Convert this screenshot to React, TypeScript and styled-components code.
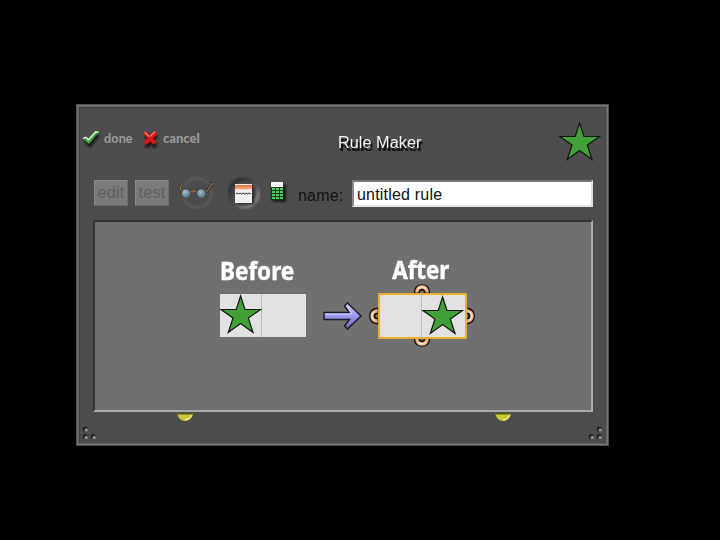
import React from "react";
import styled, { createGlobalStyle } from "styled-components";

const GlobalStyle = createGlobalStyle`
  html, body { margin: 0; background: #000; }
  * { box-sizing: border-box; }
  svg { display: block; flex: none; overflow: visible; }
`;

const Desktop = styled.main`
  width: 720px;
  height: 540px;
  padding: 104px 0 0 76px;
  overflow: hidden;
  background: #000;
  font-family: "Liberation Sans", sans-serif;
`;

const Window = styled.section`
  width: 533px;
  height: 342px;
  background: #4d4d4d;
  border: 1px solid #505050;
  box-shadow: inset 0 0 0 1px #757575, inset 0 0 0 2px #636363,
    inset 3px 3px 0 #414141, inset -3px -3px 0 #484848;
  display: flex;
  flex-direction: column;
`;

const Header = styled.header`
  height: 68px;
  display: flex;
  align-items: flex-start;
  padding: 16px 7px 0 5px;
`;

const Actions = styled.div`
  display: flex;
  width: 256px;
  padding-top: 9px;
`;

const Action = styled.button<{ $width: number; $gap: number }>`
  display: flex;
  align-items: flex-start;
  gap: ${(p) => p.$gap}px;
  width: ${(p) => p.$width}px;
  height: 24px;
  padding: 0;
  border: 0;
  background: none;
`;

const Fitted = styled.span<{ $scale: number }>`
  display: block;
  white-space: nowrap;
  transform-origin: 0 50%;
  transform: scaleX(${(p) => p.$scale});
`;

const ActionText = styled(Fitted)`
  color: #999;
  font: 900 13px/17px Lato, sans-serif;
`;

const Title = styled.h1`
  flex: 1;
  margin: 13px 0 0;
  color: #f4f4f4;
  font: 400 16px/18px "Liberation Sans", sans-serif;
  text-shadow: 1px 3px 0 #111, 2px 3px 0 #111;
`;

const Toolbar = styled.div`
  height: 47px;
  display: flex;
  align-items: flex-start;
  padding: 2px 0 0 17px;
`;

const ToolButton = styled.button`
  width: 34px;
  height: 26px;
  margin: 5px 7px 0 0;
  padding: 0;
  border: 1px solid;
  border-color: #8a8a8a #6c6c6c #6c6c6c #8a8a8a;
  background: #7b7b7b;
  color: #606060;
  font: 400 16px/24px "Liberation Sans", sans-serif;
  letter-spacing: 0.3px;
`;

const NameLabel = styled.label`
  width: 54px;
  margin: 12px 0 0 8px;
  color: #111;
  font: 400 16px/18px "Liberation Sans", sans-serif;
  letter-spacing: 0.2px;
`;

const NameInput = styled.input`
  width: 241px;
  height: 27px;
  margin-top: 5px;
  padding: 2px 0 0 3px;
  border: 2px solid;
  border-color: #777 #ddd #e5e5e5 #888;
  border-radius: 0;
  outline: 0;
  background: #fff;
  color: #111;
  font: 400 16px/20px "Liberation Sans", sans-serif;
  letter-spacing: 0.2px;
`;

const Canvas = styled.div`
  width: 500px;
  height: 192px;
  margin-left: 16px;
  border: 2px solid;
  border-color: #343434 #ababab #ababab #343434;
  background: #707070;
  display: flex;
  padding-left: 125px;
`;

const State = styled.div<{ $width: number; $top: number }>`
  width: ${(p) => p.$width}px;
  padding-top: ${(p) => p.$top}px;
`;

const StateTitle = styled(Fitted)<{ $indent: number }>`
  height: 40px;
  padding-left: ${(p) => p.$indent}px;
  color: #fff;
  font: 700 25px/33px "Noto Sans", sans-serif;
  -webkit-text-stroke: 0.5px #fff;
`;

const Cells = styled.div<{ $active?: boolean }>`
  position: relative;
  display: grid;
  grid-template-columns: 42px 1fr;
  width: ${(p) => (p.$active ? 89 : 86)}px;
  height: ${(p) => (p.$active ? 46 : 43)}px;
  border: ${(p) => (p.$active ? "2px solid #e9ae30" : "0")};
  background: #e1e1e1;
`;

const Cell = styled.div`
  &:first-child { border-right: 1px solid #bdbdbd; }
`;

const ArrowSlot = styled.div`
  width: 72px;
  padding: 79px 0 0 17px;
`;

const Handle = styled.div<{ $x: number; $y: number; $turn: number }>`
  position: absolute;
  z-index: -1;
  left: ${(p) => p.$x}px;
  top: ${(p) => p.$y}px;
  width: 16px;
  height: 10px;
  transform: rotate(${(p) => p.$turn}deg);
`;

const HandleGroup = styled.div`
  position: relative;
  z-index: 0;
`;

const Footer = styled.footer`
  height: 33px;
  display: flex;
  align-items: flex-start;
  justify-content: space-between;
  padding: 0 6px 0 5px;
`;

const Grip = styled.div`
  padding-top: 14px;
`;

const Lamps = styled.div`
  width: 334px;
  padding-top: 1px;
  display: flex;
  justify-content: space-between;
`;

const LampOffset = styled.div`
  flex: 1;
  display: flex;
  padding-left: 80px;
`;

function Star() {
  return (
    <svg width="42" height="40" viewBox="0 0 42 40">
      <path d="M20.6 2 25 15.5H40.5L28.3 24 33 38.5 20.6 29.5 8.3 38.5 13 24 1 15.5H16.2Z" fill="#42a038" stroke="#101510" strokeWidth="1.2" />
    </svg>
  );
}

function SoftShadow() {
  return <filter id="shade" x="-50%" y="-50%" width="200%" height="200%"><feGaussianBlur stdDeviation="1" /></filter>;
}

function Check() {
  return (
    <svg width="18" height="19" viewBox="0 0 18 19">
      <defs><SoftShadow /></defs>
      <path d="M2 10 4 8 7 11 14 4 18 4 8 17Z" fill="#151515" transform="translate(0 1)" filter="url(#shade)" />
      <path d="M1 8.5 4 7 6.5 9.5 13.5 1.5 17 1.5 7 14Z" fill="#3fa642" />
      <path d="M1.2 8.3 4 7.2 6.5 9.7 13.5 2H16.5" fill="none" stroke="#dcf8dc" strokeWidth="1.3" />
    </svg>
  );
}

function Cross() {
  return (
    <svg width="17" height="19" viewBox="0 0 17 19">
      <path d="m4 5 10 12M14 5 4 17" stroke="#171717" strokeWidth="4.5" filter="url(#shade)" />
      <path d="m3 2.5 10 11M14 2.5 3 13.5" stroke="#dc1b13" strokeWidth="4" />
      <path d="m2.5 2 4.5 4.5M13 1.5 8 6.5" stroke="#ff7666" strokeWidth="1.3" />
    </svg>
  );
}

function Glasses() {
  return (
    <svg width="48" height="38" viewBox="0 0 48 38">
      <defs>
        <radialGradient id="dial"><stop offset=".65" stopColor="#4b4b4b" /><stop offset=".87" stopColor="#585858" /><stop offset="1" stopColor="#4d4d4d" /></radialGradient>
        <radialGradient id="lens" cx=".4" cy=".35"><stop stopColor="#a6c0cf" /><stop offset="1" stopColor="#5f7f94" /></radialGradient>
      </defs>
      <circle cx="21" cy="18" r="17" fill="url(#dial)" />
      <path d="M6 18 4 12.5 6.5 9M30 17l2-2 3.5-6h3" fill="none" stroke="#292720" strokeWidth="2.8" />
      <path d="M6 18 4 12.5 6.5 9M30 17l2-2 3.5-6h3M14 17.5q3.5-3 7 0" fill="none" stroke="#847655" strokeWidth="1.4" />
      <circle cx="10" cy="18.5" r="4.8" fill="url(#lens)" stroke="#494638" strokeWidth="1.2" />
      <circle cx="25.3" cy="18.5" r="4.8" fill="url(#lens)" stroke="#494638" strokeWidth="1.2" />
    </svg>
  );
}

function Note() {
  return (
    <svg width="38" height="38" viewBox="0 0 38 38">
      <defs>
        <linearGradient id="ring" x2="1" y2="1"><stop offset=".1" stopColor="#292929" /><stop offset=".5" stopColor="#4b4b4b" /><stop offset=".9" stopColor="#858585" /></linearGradient>
        <linearGradient id="orange" x2="0" y2="1"><stop stopColor="#e77042" /><stop offset="1" stopColor="#ffb68e" /></linearGradient>
        <filter id="soft"><feGaussianBlur stdDeviation="1.1" /></filter>
      </defs>
      <circle cx="20" cy="18" r="14" fill="#464646" stroke="url(#ring)" strokeWidth="4" filter="url(#soft)" />
      <path d="M13 12h17v17H13Z" fill="#262626" filter="url(#soft)" />
      <path d="M11 9h17v19H11Z" fill="#f1eeee" />
      <path d="M11 10h17v4.5H11Z" fill="url(#orange)" />
      <path d="m12 19 1-1 1.5 1L16 18l1.5 1L19 18l1.5 1L22 18l1.5 1L25 18l2 1" fill="none" stroke="#343434" />
    </svg>
  );
}

function Calculator() {
  return (
    <svg width="28" height="38" viewBox="0 0 28 38">
      <path d="M11 10h13v17H11Z" fill="#151515" filter="url(#shade)" />
      <path d="M8.5 7h13v18.5h-13Z" fill="#173b1d" />
      <path d="M9 7h12v5H9Z" fill="#f5f5f5" />
      {[14, 17, 20, 23].map((y) => <path key={y} d={`M10 ${y}h3m1 0h3m1 0h3`} stroke="#50cf61" strokeWidth="2" />)}
    </svg>
  );
}

function Arrow() {
  return (
    <svg width="39" height="30" viewBox="0 0 39 30">
      <defs><linearGradient id="blue" x2="0" y2="1"><stop stopColor="#d0cfff" /><stop offset=".55" stopColor="#9592ee" /><stop offset="1" stopColor="#6964ae" /></linearGradient></defs>
      <path d="M1 11.5h25.5L21.5 5 24.5 2 38 15 24.5 28 21.5 25 26.5 18.5H1Z" fill="url(#blue)" stroke="#171723" strokeWidth="1.4" />
      <path d="M2.5 13h26L24 5" fill="none" stroke="#d8d5ff" />
    </svg>
  );
}

function LoopHandle(props: { x: number; y: number; turn: number }) {
  return (
    <Handle $x={props.x} $y={props.y} $turn={props.turn}>
      <svg width="16" height="10" viewBox="0 0 16 10">
        <path d="M3 9V7.5Q3.5 3.3 8 3.3t5 4.2V9" fill="none" stroke="#17120f" strokeWidth="6.3" />
        <path d="M3 8.5V7Q4 3 8 3t5 4v1.5" fill="none" stroke="#e7b28a" strokeWidth="3.3" />
        <path d="M4 5Q8 1 12 5" fill="none" stroke="#ffe0c5" strokeWidth="1.3" />
      </svg>
    </Handle>
  );
}

function Lamp() {
  return (
    <svg width="16" height="9" viewBox="0 0 16 9">
      <path d="M0 0h16q-2 8-8 8T0 0Z" fill="#ccc735" />
      <path d="M0 0h16l-1 1.5H1Z" fill="#58561c" />
      <path d="M15 2q-2 4.5-7 4.8" fill="none" stroke="#efed94" strokeWidth="1.4" />
    </svg>
  );
}

function GripDots({ flip = false }: { flip?: boolean }) {
  const dots = flip ? [[12, 3], [4, 10.5], [12, 10.5]] : [[3, 3], [3, 10.5], [11, 10.5]];
  return (
    <svg width="15" height="14" viewBox="0 0 15 14">
      {dots.map(([x, y]) => (
        <g key={`${x}-${y}`}>
          <circle cx={x} cy={y} r="2.5" fill="#252525" />
          <circle cx={x + 1.2} cy={y + 1} r="1.6" fill="#969696" />
        </g>
      ))}
    </svg>
  );
}

export default function App() {
  return (
    <>
      <GlobalStyle />
      <Desktop>
        <Window>
          <Header>
            <Actions>
              <Action $width={60} $gap={4}><Check /><ActionText $scale={0.98}>done</ActionText></Action>
              <Action $width={62} $gap={4}><Cross /><ActionText $scale={1}>cancel</ActionText></Action>
            </Actions>
            <Title><Fitted $scale={1.02}>Rule Maker</Fitted></Title>
            <Star />
          </Header>
          <Toolbar>
            <ToolButton>edit</ToolButton>
            <ToolButton>test</ToolButton>
            <Glasses />
            <Note />
            <Calculator />
            <NameLabel htmlFor="rule-name">name:</NameLabel>
            <NameInput id="rule-name" defaultValue="untitled rule" />
          </Toolbar>
          <Canvas>
            <State $width={86} $top={32}>
              <StateTitle $scale={0.9} $indent={0}>Before</StateTitle>
              <Cells><Cell><Star /></Cell><Cell /></Cells>
            </State>
            <ArrowSlot><Arrow /></ArrowSlot>
            <State $width={89} $top={31}>
              <StateTitle $scale={0.89} $indent={16}>After</StateTitle>
              <HandleGroup>
                <LoopHandle x={36} y={-9} turn={0} />
                <LoopHandle x={84} y={18} turn={90} />
                <LoopHandle x={36} y={44} turn={180} />
                <LoopHandle x={-12} y={18} turn={-90} />
                <Cells $active><Cell /><Cell><Star /></Cell></Cells>
              </HandleGroup>
            </State>
          </Canvas>
          <Footer>
            <Grip><GripDots /></Grip>
            <LampOffset><Lamps><Lamp /><Lamp /></Lamps></LampOffset>
            <Grip><GripDots flip /></Grip>
          </Footer>
        </Window>
      </Desktop>
    </>
  );
}
